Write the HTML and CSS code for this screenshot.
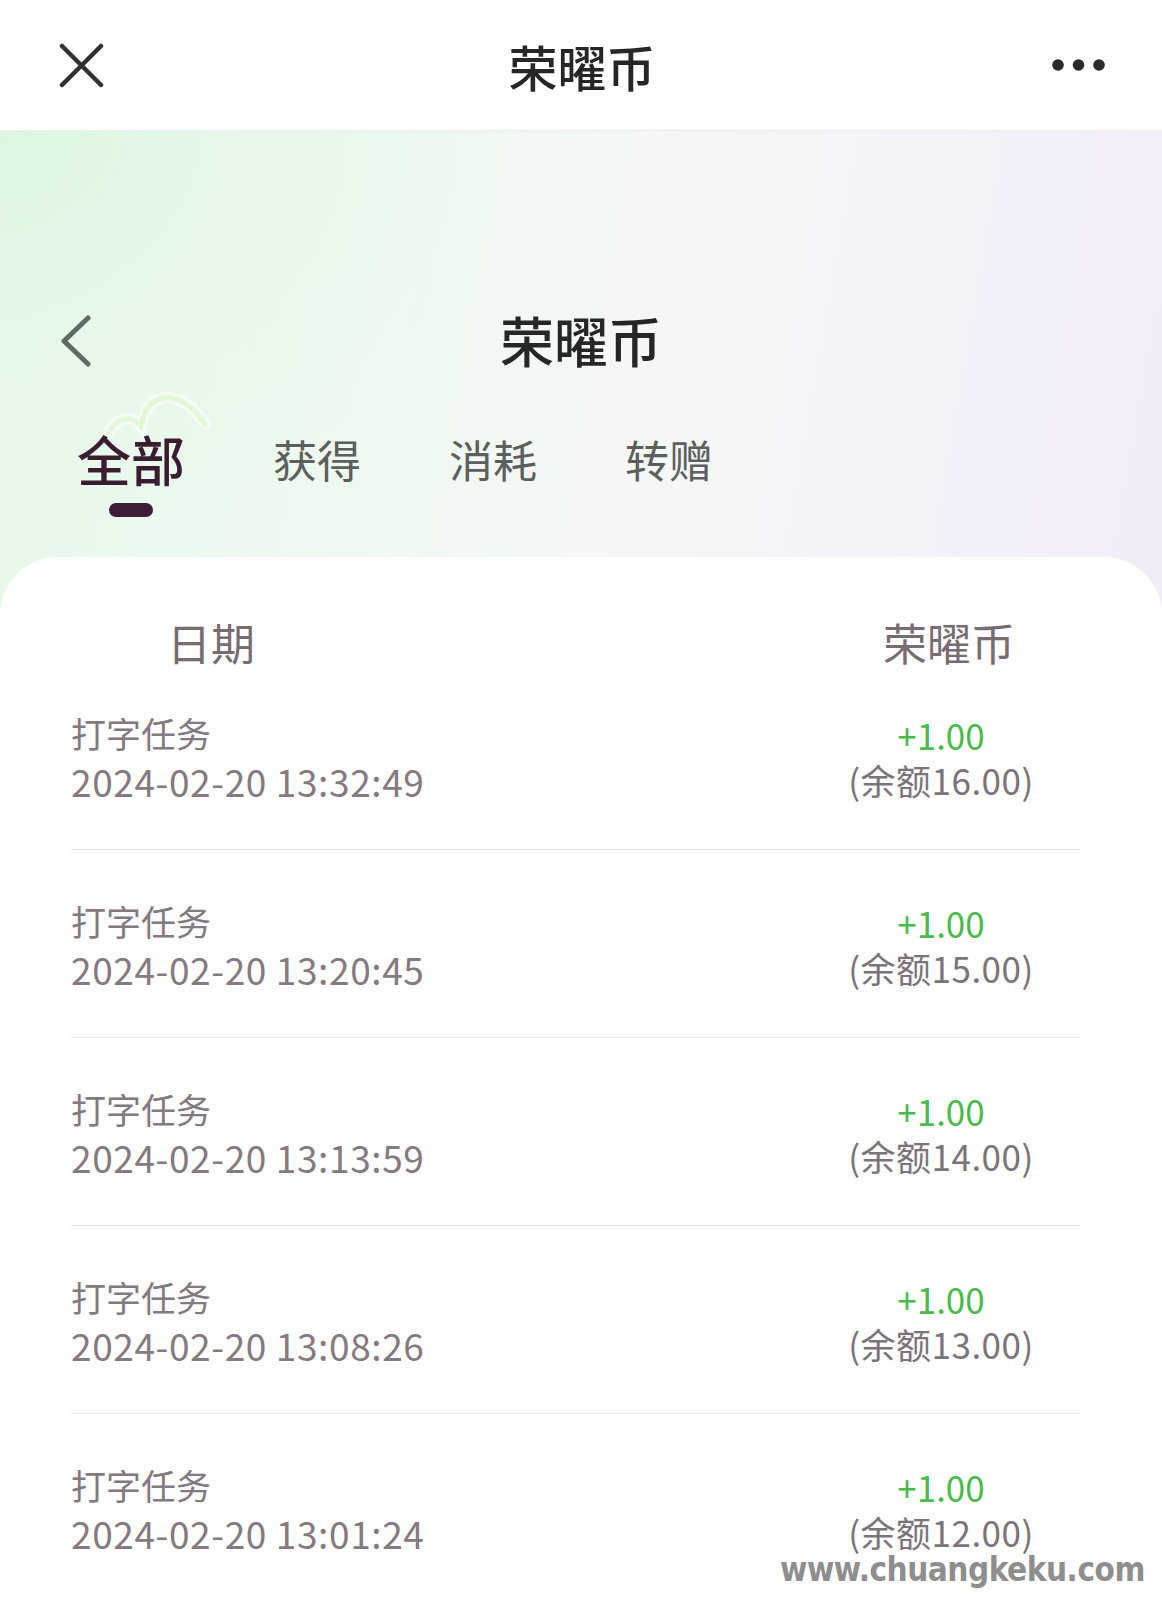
FILE: index.html
```html
<!DOCTYPE html>
<html lang="zh-CN">
<head>
<meta charset="utf-8">
<title>荣曜币</title>
<link rel="stylesheet" href="styles.css">
</head>
<body>
<div class="topbar">
  <svg class="close-icon" width="45" height="45" viewBox="0 0 45 45"><path d="M3 3 L42 42 M42 3 L3 42" stroke="#303030" stroke-width="4.5" stroke-linecap="round" fill="none"/></svg>
  <div class="topbar-title">荣曜币</div>
  <svg class="more-icon" width="53" height="12" viewBox="0 0 53 12"><circle cx="6" cy="6" r="5.8" fill="#2b2b2b"/><circle cx="26.5" cy="6" r="5.8" fill="#2b2b2b"/><circle cx="47" cy="6" r="5.8" fill="#2b2b2b"/></svg>
</div>
<div class="page">
  <div class="hero">
    <div class="nav">
      <svg class="back-icon" width="30" height="52" viewBox="0 0 30 52"><polyline points="27,3 3,26 27,49" stroke="#5f6b63" stroke-width="5" stroke-linecap="round" stroke-linejoin="round" fill="none"/></svg>
      <div class="nav-title">荣曜币</div>
      <div class="nav-spacer"></div>
    </div>
    <div class="tabs">
      <div class="tab tab-active">
        <svg class="swoosh" width="120" height="60" viewBox="0 0 120 60"><path d="M8 48 C16 34 30 30 40 42 C44 20 56 12 70 14 C84 16 96 28 104 40" stroke="#ffffff" stroke-width="12" stroke-linecap="round" fill="none" opacity="0.7"/><path d="M8 48 C16 34 30 30 40 42 C44 20 56 12 70 14 C84 16 96 28 104 40" stroke="#e2f7cf" stroke-width="5" stroke-linecap="round" fill="none"/></svg>
        <span class="tab-label">全部</span>
        <span class="tab-bar"></span>
      </div>
      <div class="tab"><span class="tab-label">获得</span></div>
      <div class="tab"><span class="tab-label">消耗</span></div>
      <div class="tab"><span class="tab-label">转赠</span></div>
    </div>
  </div>
  <div class="card">
    <div class="list-head">
      <div class="head-date">日期</div>
      <div class="head-coin">荣曜币</div>
    </div>
    <div class="row">
      <div class="row-left"><div class="task">打字任务</div><div class="time">2024-02-20 13:32:49</div></div>
      <div class="row-right"><div class="amount">+1.00</div><div class="balance">(余额16.00)</div></div>
    </div>
    <div class="row">
      <div class="row-left"><div class="task">打字任务</div><div class="time">2024-02-20 13:20:45</div></div>
      <div class="row-right"><div class="amount">+1.00</div><div class="balance">(余额15.00)</div></div>
    </div>
    <div class="row">
      <div class="row-left"><div class="task">打字任务</div><div class="time">2024-02-20 13:13:59</div></div>
      <div class="row-right"><div class="amount">+1.00</div><div class="balance">(余额14.00)</div></div>
    </div>
    <div class="row">
      <div class="row-left"><div class="task">打字任务</div><div class="time">2024-02-20 13:08:26</div></div>
      <div class="row-right"><div class="amount">+1.00</div><div class="balance">(余额13.00)</div></div>
    </div>
    <div class="row row-last">
      <div class="row-left"><div class="task">打字任务</div><div class="time">2024-02-20 13:01:24</div></div>
      <div class="row-right"><div class="amount">+1.00</div><div class="balance">(余额12.00)</div></div>
    </div>
  </div>
</div>
<div class="watermark">www.chuangkeku.com</div>
</body>
</html>
```
FILE: styles.css
```css
* { box-sizing: border-box; }
html, body { margin: 0; padding: 0; }
body {
  width: 1162px;
  height: 1600px;
  overflow: hidden;
  background: #ffffff;
  font-family: "Noto Sans CJK SC", "Noto Sans", sans-serif;
  position: relative;
}
.topbar {
  height: 131px;
  background: #ffffff;
  border-bottom: 1px solid #ececec;
  display: grid;
  grid-template-columns: 1fr auto 1fr;
  align-items: center;
  padding: 0 57px 0 59px;
}
.close-icon { justify-self: start; }
.more-icon { justify-self: end; }
.topbar-title {
  font-size: 49px;
  font-weight: 500;
  color: #262626;
  line-height: 1;
}
.page {
  background:
    radial-gradient(ellipse 520px 420px at 0% 0%, rgba(220,246,224,0.9) 0%, rgba(228,248,231,0.5) 50%, rgba(240,250,242,0) 100%),
    linear-gradient(100deg, #e7f8ea 0%, #eef9f0 30%, #f5f7f6 55%, #f5f2f9 75%, #f2ecf9 100%);
  background-size: 100% 500px, 100% 500px;
  background-repeat: no-repeat;
  background-color: #ffffff;
}
.hero {
  padding-top: 160px;
}
.nav {
  height: 100px;
  display: grid;
  grid-template-columns: 1fr auto 1fr;
  align-items: center;
  padding: 0 61px;
}
.nav-title {
  font-size: 54px;
  font-weight: 500;
  color: #262626;
  line-height: 1;
  margin-top: -2px;
}
.tabs {
  display: flex;
  gap: 88px;
  padding-left: 77px;
  margin-top: 33px;
  height: 133px;
}
.tab {
  display: flex;
  flex-direction: column;
  align-items: center;
  position: relative;
}
.tab-label {
  font-size: 44px;
  line-height: 70px;
  color: #5b605c;
  font-weight: 400;
}
.tab-active .tab-label {
  font-size: 54px;
  font-weight: 500;
  color: #3a1d31;
  position: relative;
}
.tab-bar {
  display: block;
  width: 44px;
  height: 14px;
  border-radius: 7px;
  background: #3d1f35;
  margin-top: 9px;
}
.swoosh {
  position: absolute;
  left: 24px;
  top: -40px;
  opacity: 0.75;
}
.card {
  background: #ffffff;
  border-radius: 58px 58px 0 0;
  min-height: 1043px;
}
.list-head {
  height: 105px;
  width: 1009px;
  display: grid;
  grid-template-columns: 1fr 220px;
  margin-left: 71px;
  padding: 63px 29px 0 0;
  font-size: 44px;
  line-height: 44px;
  color: #786c73;
}
.head-date { padding-left: 96px; }
.head-coin { text-align: center; padding-left: 16px; }
.row {
  height: 188px;
  width: 1009px;
  margin-left: 71px;
  border-bottom: 1px solid #e6e4e6;
  display: grid;
  grid-template-columns: 1fr 220px;
  align-items: center;
  padding: 2px 29px 0 0;
}
.row-last { border-bottom: none; }
.task {
  font-size: 35px;
  line-height: 49px;
  color: #837980;
}
.time {
  font-size: 37px;
  line-height: 49px;
  color: #847a80;
  letter-spacing: 0.6px;
}
.row-right { text-align: center; }
.amount {
  font-size: 35px;
  line-height: 46px;
  color: #4cb94f;
}
.balance {
  font-size: 35px;
  line-height: 44px;
  color: #7b7379;
  letter-spacing: 0.5px;
}
.watermark {
  position: absolute;
  left: 780px;
  top: 1548px;
  font-family: "DejaVu Sans", sans-serif;
  font-stretch: condensed;
  font-weight: bold;
  font-size: 33px;
  line-height: 44px;
  color: #8e8e8e;
  letter-spacing: -0.5px;
  text-shadow: 0 0 3px #ffffff, 0 0 3px #ffffff;
}
```
